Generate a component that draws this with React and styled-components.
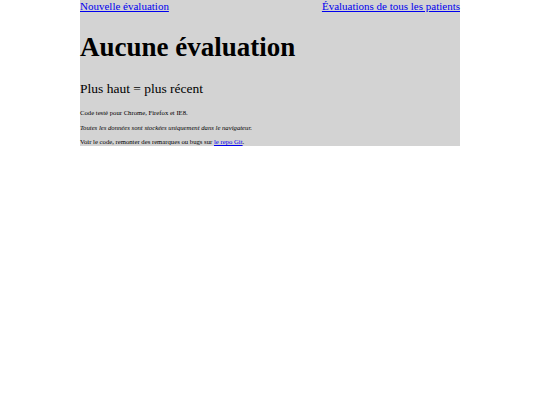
import React from 'react';
import styled, { createGlobalStyle } from 'styled-components';

const Global = createGlobalStyle`
  body {
    margin: 0;
    background: #fff;
    font-family: "Liberation Serif", "Times New Roman", serif;
  }
`;

const Page = styled.div`
  width: 380px;
  margin: 0 auto;
  background: #d3d3d3;
  display: flow-root;
`;

const Nav = styled.nav`
  display: flex;
  justify-content: space-between;
  font-size: 11px;
  line-height: 13px;
`;

const Link = styled.a`
  color: #0000ee;
  text-decoration: underline;
`;

const Title = styled.h1`
  font-size: 27px;
  font-weight: bold;
  margin: 18px 0 17px;
  line-height: 32px;
`;

const Subtitle = styled.h2`
  font-size: 13.5px;
  font-weight: normal;
  margin: 0 0 12px;
  line-height: 17px;
`;

const Note = styled.p`
  font-size: 6.7px;
  line-height: 8px;
  margin: 0 0 6.5px;
  font-style: ${(p) => (p.$italic ? 'italic' : 'normal')};

  &:last-child {
    margin-bottom: 0;
  }
`;

export default function App() {
  return (
    <>
      <Global />
      <Page>
        <Nav>
          <Link href="#">Nouvelle évaluation</Link>
          <Link href="#">Évaluations de tous les patients</Link>
        </Nav>
        <Title>Aucune évaluation</Title>
        <Subtitle>Plus haut = plus récent</Subtitle>
        <Note>Code testé pour Chrome, Firefox et IE8.</Note>
        <Note $italic>Toutes les données sont stockées uniquement dans le navigateur.</Note>
        <Note>
          Voir le code, remonter des remarques ou bugs sur <Link href="#">le repo Git</Link>.
        </Note>
      </Page>
    </>
  );
}
